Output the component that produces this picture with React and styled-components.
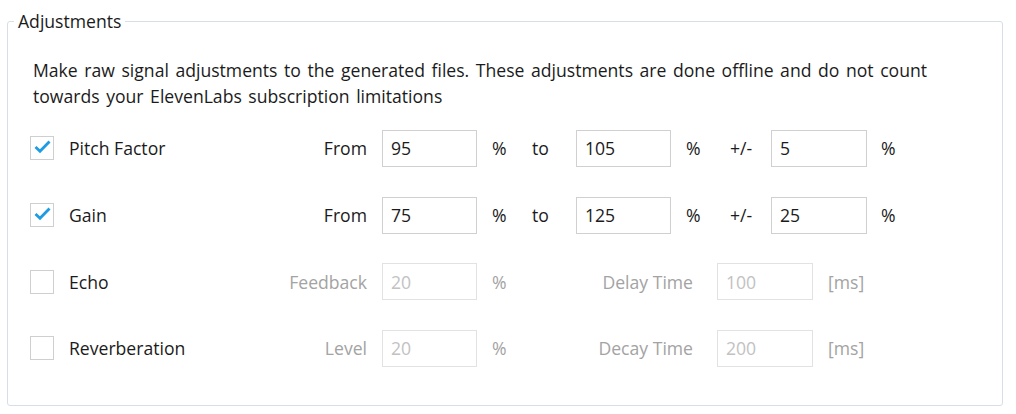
import { createGlobalStyle, styled } from "styled-components";

const GlobalStyle = createGlobalStyle`
    html, body {
        margin: 0;
        background: #ffffff;
    }
    body {
        font-family: "Open Sans", "Noto Sans", sans-serif;
        font-size: 17.6px;
        color: #1b1b1b;
    }
`;

const Page = styled.div`
    width: 1016px;
    height: 414px;
    box-sizing: border-box;
    padding: 9px 13px 0 7px;
`;

const Group = styled.fieldset`
    margin: 0;
    height: 397px;
    box-sizing: border-box;
    border: 1px solid #d6dfe6;
    border-radius: 3px;
    padding: 0 0 0 22px;
    legend {
        margin-left: -16px;
        padding: 0 4px;
        line-height: 24px;
        color: #1b1b1b;
    }
`;

const Description = styled.p`
    margin: 24px 0 6px 3px;
    line-height: 26px;
    word-spacing: 2px;
    width: 950px;
`;

const Row = styled.div`
    display: flex;
    align-items: center;
    height: 66.7px;
`;

const Box = styled.span`
    width: 22px;
    height: 22px;
    flex: none;
    border: 1px solid #cfcfcf;
    background: #fff;
    display: flex;
    align-items: center;
    justify-content: center;
`;

const Cell = styled.span`
    flex: none;
    width: ${(p) => p.$w}px;
    text-align: ${(p) => p.$align || "left"};
    color: ${(p) => (p.$off ? "#a3a3a3" : "#1b1b1b")};
    white-space: nowrap;
`;

const Field = styled.span`
    flex: none;
    width: ${(p) => p.$w || 95}px;
    height: 37px;
    box-sizing: border-box;
    border: 1px solid ${(p) => (p.$off ? "#e2e2e2" : "#d0d0d0")};
    padding-left: 8px;
    display: flex;
    align-items: center;
    color: ${(p) => (p.$off ? "#c2c2c2" : "#1b1b1b")};
`;

const Check = ({ on }) => (
    <Box>
        {on && (
            <svg width="22" height="22" viewBox="0 0 22 22">
                <path d="M4.5 10 L9 14.2 L18.5 4.5" fill="none" stroke="#1d9be3" strokeWidth="2.8" />
            </svg>
        )}
    </Box>
);

const rangeRows = [
    { name: "Pitch Factor", from: "95", to: "105", pm: "5" },
    { name: "Gain", from: "75", to: "125", pm: "25" },
];

const effectRows = [
    { name: "Echo", label: "Feedback", value: "20", label2: "Delay Time", value2: "100" },
    { name: "Reverberation", label: "Level", value: "20", label2: "Decay Time", value2: "200" },
];

export default function App() {
    return (
        <Page>
            <GlobalStyle />
            <Group>
                <legend>Adjustments</legend>
                <Description>
                    Make raw signal adjustments to the generated files. These adjustments are done offline and do not count
                    <br />
                    towards your ElevenLabs subscription limitations
                </Description>
                {rangeRows.map((r) => (
                    <Row key={r.name}>
                        <Check on />
                        <Cell $w={15} />
                        <Cell $w={201}>{r.name}</Cell>
                        <Cell $w={97} $align="right">From</Cell>
                        <Cell $w={15} />
                        <Field>{r.from}</Field>
                        <Cell $w={15} />
                        <Cell $w={40}>%</Cell>
                        <Cell $w={44}>to</Cell>
                        <Field>{r.to}</Field>
                        <Cell $w={15} />
                        <Cell $w={44}>%</Cell>
                        <Cell $w={41}>+/-</Cell>
                        <Field $w={96}>{r.pm}</Field>
                        <Cell $w={14} />
                        <Cell $w={30}>%</Cell>
                    </Row>
                ))}
                {effectRows.map((r) => (
                    <Row key={r.name}>
                        <Check />
                        <Cell $w={15} />
                        <Cell $w={201}>{r.name}</Cell>
                        <Cell $w={97} $align="right" $off>{r.label}</Cell>
                        <Cell $w={15} />
                        <Field $off>{r.value}</Field>
                        <Cell $w={15} />
                        <Cell $w={40} $off>%</Cell>
                        <Cell $w={161} $align="right" $off>{r.label2}</Cell>
                        <Cell $w={24} />
                        <Field $w={96} $off>{r.value2}</Field>
                        <Cell $w={15} />
                        <Cell $w={50} $off>[ms]</Cell>
                    </Row>
                ))}
            </Group>
        </Page>
    );
}
